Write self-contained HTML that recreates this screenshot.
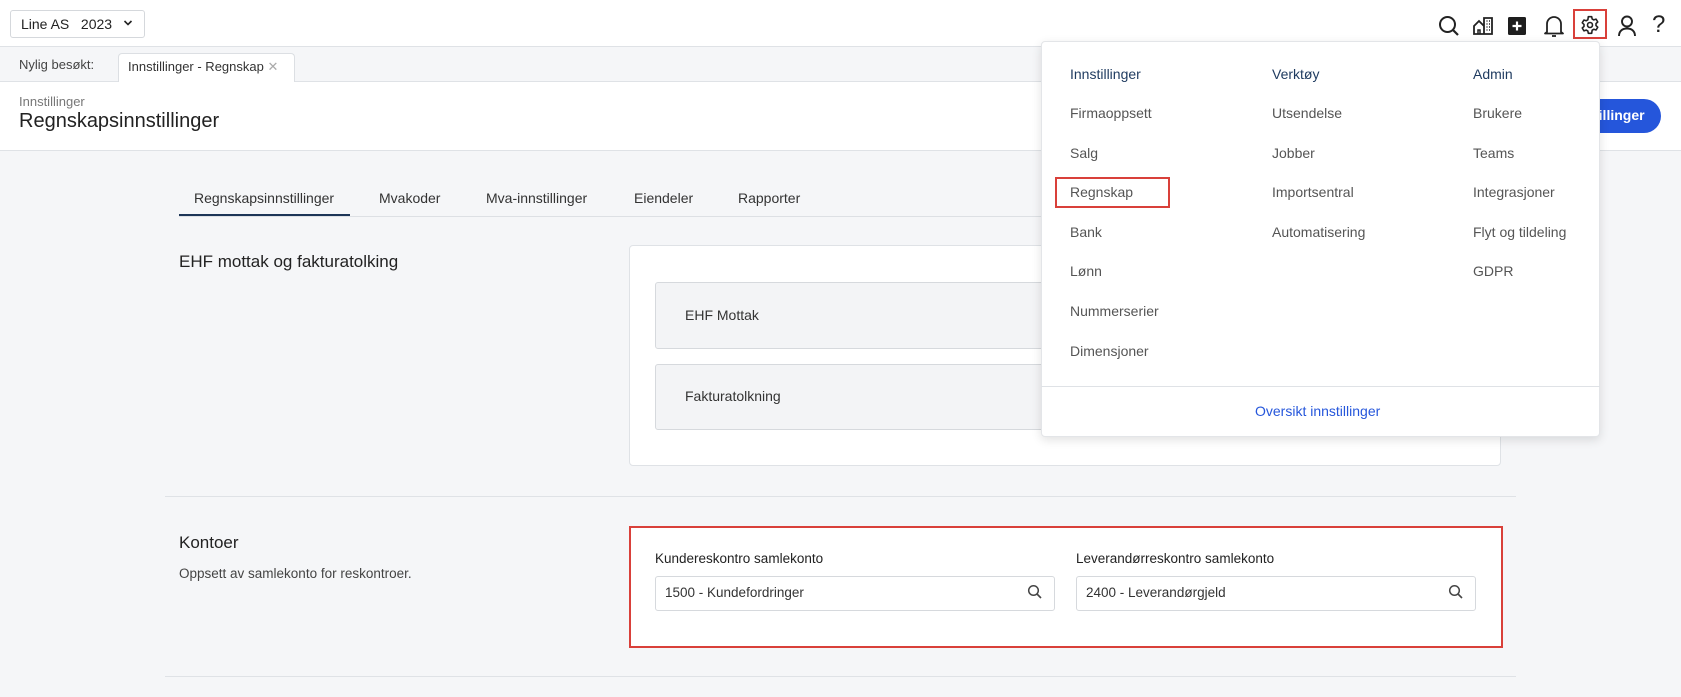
<!DOCTYPE html>
<html><head><meta charset="utf-8"><style>
*{box-sizing:border-box;margin:0;padding:0}
body{width:1681px;height:697px;overflow:hidden;background:#f5f6f8;font-family:"Liberation Sans",sans-serif;color:#2b2b2b;position:relative}
.abs{position:absolute}
.t{position:absolute;white-space:nowrap}
</style></head><body>
<!-- header -->
<div class="abs" style="left:0;top:0;width:1681px;height:47px;background:#fff;border-bottom:1px solid #dfe2e6"></div>
<div class="abs" style="left:10px;top:10px;width:135px;height:28px;border:1px solid #d5d8dc;border-radius:3px;background:#fff"></div>
<div class="t" style="left:21px;top:16px;font-size:14px;color:#222">Line AS&nbsp;&nbsp; 2023</div>
<svg class="abs" style="left:123px;top:19px" width="10" height="8" viewBox="0 0 10 8"><path d="M1.5 2l3.5 3.5L8.5 2" fill="none" stroke="#222" stroke-width="1.6"/></svg>
<!-- icons -->
<svg class="abs" style="left:1437px;top:14px" width="24" height="24" viewBox="0 0 24 24"><circle cx="10.5" cy="10.5" r="7.5" fill="none" stroke="#222" stroke-width="2"/><path d="M16 16l5 5" stroke="#222" stroke-width="2.2"/></svg>
<svg class="abs" style="left:1472px;top:15px" width="22" height="22" viewBox="0 0 22 22"><path d="M2 19V11l5-5 5 5v8zM12 19V3h8v16z" fill="none" stroke="#222" stroke-width="1.8"/><path d="M6 19v-4h2v4" stroke="#222" stroke-width="1.5" fill="none"/><path d="M14.5 6h1M17 6h1M14.5 9h1M17 9h1M14.5 12h1M17 12h1M14.5 15h1M17 15h1" stroke="#222" stroke-width="1.5"/></svg>
<svg class="abs" style="left:1508px;top:17px" width="18" height="18" viewBox="0 0 18 18"><rect width="18" height="18" rx="1.5" fill="#1e1e1e"/><path d="M9 4.5v9M4.5 9h9" stroke="#fff" stroke-width="2.2"/></svg>
<svg class="abs" style="left:1543px;top:13px" width="22" height="26" viewBox="0 0 22 26"><path d="M4 19V11a7 7 0 0114 0v8l2 1.5H2z" fill="none" stroke="#222" stroke-width="1.8" stroke-linejoin="round"/><path d="M9 23h4" stroke="#222" stroke-width="1.8"/></svg>
<div class="abs" style="left:1573px;top:9px;width:34px;height:30px;border:2px solid #d9403a"></div>
<svg class="abs" style="left:1580px;top:15px" width="20" height="20" viewBox="0 0 24 24"><path d="M10 2h4l.6 2.8 2 1.1 2.7-.9 2 3.4-2.1 1.9v2.4l2.1 1.9-2 3.4-2.7-.9-2 1.1L14 22h-4l-.6-2.8-2-1.1-2.7.9-2-3.4 2.1-1.9V11.3L2.7 9.4l2-3.4 2.7.9 2-1.1z" fill="none" stroke="#222" stroke-width="1.9" stroke-linejoin="round"/><circle cx="12" cy="12" r="3" fill="none" stroke="#222" stroke-width="1.9"/></svg>
<svg class="abs" style="left:1616px;top:14px" width="22" height="24" viewBox="0 0 22 24"><circle cx="11" cy="7.5" r="5" fill="none" stroke="#222" stroke-width="1.9"/><path d="M3 22c0-5 3.5-7.5 8-7.5s8 2.5 8 7.5" fill="none" stroke="#222" stroke-width="1.9"/></svg>
<div class="t" style="left:1652px;top:11px;font-size:24px;color:#222">?</div>
<!-- recent bar -->
<div class="abs" style="left:0;top:48px;width:1681px;height:34px;background:#f5f6f8;border-bottom:1px solid #dfe2e6"></div>
<div class="t" style="left:19px;top:57px;font-size:13px;color:#444">Nylig besøkt:</div>
<div class="abs" style="left:118px;top:53px;width:177px;height:30px;background:#fff;border:1px solid #dcdfe3;border-bottom:none;border-radius:4px 4px 0 0"></div>
<div class="t" style="left:128px;top:59px;font-size:13px;color:#333">Innstillinger - Regnskap <span style="color:#aaa">✕</span></div>
<!-- title -->
<div class="abs" style="left:0;top:82px;width:1681px;height:69px;background:#fff;border-bottom:1px solid #dfe2e6"></div>
<div class="t" style="left:19px;top:94px;font-size:13px;color:#777">Innstillinger</div>
<div class="t" style="left:19px;top:110px;font-size:20px;color:#222">Regnskapsinnstillinger</div>
<div class="abs" style="left:1540px;top:99px;width:121px;height:34px;background:#2556db;border-radius:17px"></div>
<div class="t" style="left:1594px;top:107px;font-size:14px;font-weight:bold;color:#fff">tillinger</div>
<!-- tabs -->
<div class="abs" style="left:179px;top:216px;width:1322px;height:1px;background:#dde0e4"></div>
<div class="abs" style="left:179px;top:214px;width:171px;height:2px;background:#1d3557"></div>
<div class="t" style="left:194px;top:190px;font-size:14px;color:#333">Regnskapsinnstillinger</div>
<div class="t" style="left:379px;top:190px;font-size:14px;color:#333">Mvakoder</div>
<div class="t" style="left:486px;top:190px;font-size:14px;color:#333">Mva-innstillinger</div>
<div class="t" style="left:634px;top:190px;font-size:14px;color:#333">Eiendeler</div>
<div class="t" style="left:738px;top:190px;font-size:14px;color:#333">Rapporter</div>
<!-- EHF section -->
<div class="t" style="left:179px;top:252px;font-size:17px;color:#222">EHF mottak og fakturatolking</div>
<div class="abs" style="left:629px;top:245px;width:872px;height:221px;background:#fff;border:1px solid #dfe2e6;border-radius:4px"></div>
<div class="abs" style="left:655px;top:282px;width:800px;height:67px;background:#f3f4f6;border:1px solid #d6d9dd;border-radius:3px"></div>
<div class="t" style="left:685px;top:307px;font-size:14px;color:#333">EHF Mottak</div>
<div class="abs" style="left:655px;top:364px;width:800px;height:66px;background:#f3f4f6;border:1px solid #d6d9dd;border-radius:3px"></div>
<div class="t" style="left:685px;top:388px;font-size:14px;color:#333">Fakturatolkning</div>
<div class="abs" style="left:165px;top:496px;width:1351px;height:1px;background:#dfe2e6"></div>
<!-- Kontoer -->
<div class="t" style="left:179px;top:533px;font-size:17px;color:#222">Kontoer</div>
<div class="t" style="left:179px;top:566px;font-size:13.5px;color:#444">Oppsett av samlekonto for reskontroer.</div>
<div class="abs" style="left:629px;top:526px;width:874px;height:122px;background:#fff;border:2px solid #d9403a"></div>
<div class="t" style="left:655px;top:551px;font-size:13.5px;color:#222">Kundereskontro samlekonto</div>
<div class="abs" style="left:655px;top:576px;width:400px;height:35px;background:#fff;border:1px solid #d6d9dd;border-radius:3px"></div>
<div class="t" style="left:665px;top:585px;font-size:13.5px;color:#333">1500 - Kundefordringer</div>
<svg class="abs" style="left:1027px;top:584px" width="16" height="16" viewBox="0 0 16 16"><circle cx="6.5" cy="6.5" r="4.8" fill="none" stroke="#444" stroke-width="1.5"/><path d="M10 10l4 4" stroke="#444" stroke-width="1.6"/></svg>
<div class="t" style="left:1076px;top:551px;font-size:13.5px;color:#222">Leverandørreskontro samlekonto</div>
<div class="abs" style="left:1076px;top:576px;width:400px;height:35px;background:#fff;border:1px solid #d6d9dd;border-radius:3px"></div>
<div class="t" style="left:1086px;top:585px;font-size:13.5px;color:#333">2400 - Leverandørgjeld</div>
<svg class="abs" style="left:1448px;top:584px" width="16" height="16" viewBox="0 0 16 16"><circle cx="6.5" cy="6.5" r="4.8" fill="none" stroke="#444" stroke-width="1.5"/><path d="M10 10l4 4" stroke="#444" stroke-width="1.6"/></svg>
<div class="abs" style="left:165px;top:676px;width:1351px;height:1px;background:#dfe2e6"></div>
<!-- dropdown -->
<div class="abs" style="left:1041px;top:41px;width:559px;height:396px;background:#fff;border:1px solid #e3e5e8;border-radius:4px;box-shadow:0 3px 10px rgba(0,0,0,.12)"></div>
<div class="abs" style="left:1041px;top:386px;width:559px;height:1px;background:#dfe2e6"></div>
<div class="t" style="left:1070px;top:66px;font-size:14px;color:#1e3a5f">Innstillinger</div>
<div class="t" style="left:1272px;top:66px;font-size:14px;color:#1e3a5f">Verktøy</div>
<div class="t" style="left:1473px;top:66px;font-size:14px;color:#1e3a5f">Admin</div>
<div style="font-size:14px;color:#555">
<div class="t" style="left:1070px;top:105px">Firmaoppsett</div>
<div class="t" style="left:1070px;top:145px">Salg</div>
<div class="t" style="left:1070px;top:184px">Regnskap</div>
<div class="t" style="left:1070px;top:224px">Bank</div>
<div class="t" style="left:1070px;top:263px">Lønn</div>
<div class="t" style="left:1070px;top:303px">Nummerserier</div>
<div class="t" style="left:1070px;top:343px">Dimensjoner</div>
<div class="t" style="left:1272px;top:105px">Utsendelse</div>
<div class="t" style="left:1272px;top:145px">Jobber</div>
<div class="t" style="left:1272px;top:184px">Importsentral</div>
<div class="t" style="left:1272px;top:224px">Automatisering</div>
<div class="t" style="left:1473px;top:105px">Brukere</div>
<div class="t" style="left:1473px;top:145px">Teams</div>
<div class="t" style="left:1473px;top:184px">Integrasjoner</div>
<div class="t" style="left:1473px;top:224px">Flyt og tildeling</div>
<div class="t" style="left:1473px;top:263px">GDPR</div>
</div>
<div class="abs" style="left:1055px;top:177px;width:115px;height:31px;border:2px solid #d9403a"></div>
<div class="t" style="left:1255px;top:403px;font-size:14px;color:#2556db">Oversikt innstillinger</div>
</body></html>
